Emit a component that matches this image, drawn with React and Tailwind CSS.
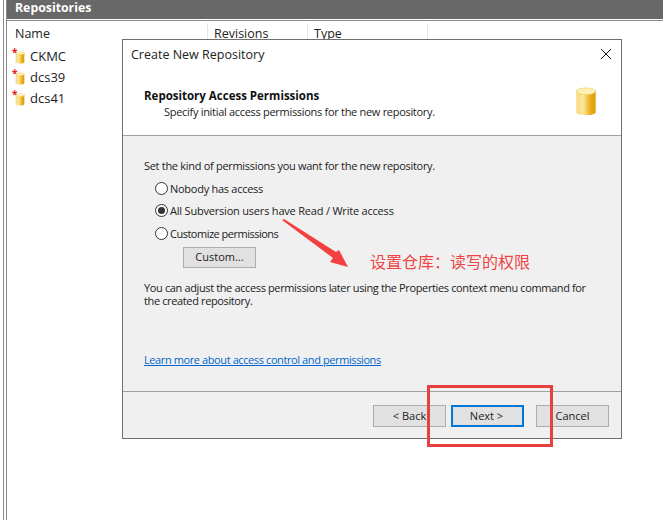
const font = { fontFamily: '"Open Sans", "Noto Sans CJK SC", sans-serif' };

const RepoIcon = ({ className }) => (
  <svg viewBox="0 0 22 30" className={className}>
    <defs>
      <linearGradient id="cyl" x1="0" x2="1" y1="0" y2="0">
        <stop offset="0" stopColor="#f6d97a" />
        <stop offset="0.35" stopColor="#fbe89c" />
        <stop offset="0.75" stopColor="#e8ab14" />
        <stop offset="1" stopColor="#dd9d08" />
      </linearGradient>
    </defs>
    <path d="M1 4v22c0 4 20 4 20 0V4z" fill="url(#cyl)" />
    <ellipse cx="11" cy="4.5" rx="10" ry="3.5" fill="#fdf0b4" stroke="#e9c44f" strokeWidth="0.6" />
  </svg>
);

const RepoRow = ({ name }) => (
  <div className="flex h-[21px] items-center pl-[12px]">
    <div className="relative h-[16px] w-[18px]">
      <RepoIcon className="absolute left-[3px] top-[2px] h-[13px] w-[10px]" />
      <span className="absolute left-[0px] top-[-3px] text-[10px] font-bold leading-[12px] text-[#e01b1b]">*</span>
    </div>
    <span className="text-[13px] leading-none text-[#222]">{name}</span>
  </div>
);

const Radio = ({ label, checked, labelClass }) => (
  <div className="flex h-[22.5px] items-center">
    <div className="flex h-[13px] w-[13px] items-center justify-center rounded-full border border-[#333] bg-white">
      {checked && <div className="h-[7px] w-[7px] rounded-full bg-[#333]" />}
    </div>
    <span className={labelClass}>{label}</span>
  </div>
);

const WizardButton = ({ children, primary }) => (
  <div
    className={
      primary
        ? 'flex h-[22px] w-[73px] items-center justify-center border-2 border-[#0078d7] bg-[#e1e1e1] pr-[2px] text-[11px] text-[#222]'
        : 'flex h-[22px] w-[73px] items-center justify-center border border-[#adadad] bg-[#e1e1e1] text-[11px] text-[#222]'
    }
  >
    {children}
  </div>
);

export default function App() {
  return (
    <div className="relative h-[520px] w-[663px] overflow-hidden bg-white" style={font}>
      <div className="flex h-full">
        <div className="w-[3px] shrink-0" />
        <div className="w-[4px] shrink-0 border-x border-[#8a8a8a]" />
        <div className="flex min-w-0 flex-1 flex-col">
          <div className="flex h-[19px] shrink-0 items-start bg-[#686868] pl-[8px] text-[12.3px] font-bold leading-[15px] text-white">
            Repositories
          </div>
          <div className="mt-[1px] h-[1px] shrink-0 bg-[#8a8a8a]" />
          <div className="flex h-[24px] shrink-0 items-center pt-[2px] text-[12.5px] text-[#222]">
            <div className="w-[201px] self-stretch border-r border-[#e5e5e5] pl-[8px] leading-[22px]">Name</div>
            <div className="w-[99px] self-stretch pl-[6px] leading-[22px]">Revisions</div>
            <div className="w-[120px] self-stretch border-l border-[#e5e5e5] pl-[6px] leading-[22px]">Type</div>
            <div className="self-stretch border-l border-[#e5e5e5]" />
          </div>
          <div className="ml-[-7px] pt-[1px]">
            <RepoRow name="CKMC" />
            <RepoRow name="dcs39" />
            <RepoRow name="dcs41" />
          </div>
        </div>
      </div>

      {/* wizard window */}
      <div className="absolute left-[122px] top-[39px] flex h-[400px] w-[500px] flex-col border border-[#6f6f6f] bg-[#f0f0f0]">
        <div className="relative h-[95px] shrink-0 bg-white">
          <div className="pl-[8px] pt-[5px] text-[12.5px] leading-[20px] text-[#222]">Create New Repository</div>
          <svg viewBox="0 0 10 10" className="absolute right-[10px] top-[9px] h-[10px] w-[10px]">
            <path d="M0 0l10 10M10 0L0 10" stroke="#111" strokeWidth="1" fill="none" />
          </svg>
          <div className="pl-[21px] pt-[23px] text-[11.5px] font-bold leading-[16px] text-[#111]">Repository Access Permissions</div>
          <div className="pl-[41px] text-[11px] leading-[16px] tracking-[-0.3px] text-[#222]">Specify initial access permissions for the new repository.</div>
          <RepoIcon className="absolute left-[452px] top-[47px] h-[29px] w-[22px]" />
        </div>
        <div className="h-[1px] shrink-0 bg-[#a0a0a0]" />
        <div className="flex flex-1 flex-col pl-[21px] pt-[22px]">
          <div className="text-[11px] leading-[16px] tracking-[-0.3px] text-[#222]">Set the kind of permissions you want for the new repository.</div>
          <div className="ml-[11px] mt-[3px] flex flex-col leading-none">
            <Radio label="Nobody has access" labelClass="ml-[2px] text-[11px] tracking-[-0.27px] text-[#222]" />
            <Radio label="All Subversion users have Read / Write access" checked labelClass="ml-[2px] text-[11px] tracking-[-0.2px] text-[#222]" />
            <Radio label="Customize permissions" labelClass="ml-[2px] text-[11px] tracking-[-0.5px] text-[#222]" />
          </div>
          <div className="ml-[39px] mt-[2px] flex h-[21px] w-[73px] items-center justify-center border border-[#adadad] bg-[#e1e1e1] text-[11px] text-[#222]">
            Custom...
          </div>
          <div className="mt-[13px] w-[450px] text-[11px] leading-[13px] tracking-[-0.37px] text-[#222]">
            You can adjust the access permissions later using the Properties context menu command for the created repository.
          </div>
          <div className="mt-[45px] text-[11px] leading-[16px] tracking-[-0.4px] text-[#0066cc] underline">Learn more about access control and permissions</div>
        </div>
        <div className="h-[1px] shrink-0 bg-[#a0a0a0]" />
        <div className="flex h-[46px] shrink-0 items-start justify-end pr-[12px] pt-[13px]">
          <WizardButton>&lt; Back</WizardButton>
          <div className="ml-[5px]">
            <WizardButton primary>Next &gt;</WizardButton>
          </div>
          <div className="ml-[12px]">
            <WizardButton>Cancel</WizardButton>
          </div>
        </div>
      </div>

      {/* screenshot annotations */}
      <svg viewBox="0 0 663 520" className="pointer-events-none absolute inset-0 h-[520px] w-[663px]">
        <polygon points="282,220 284,219 336,252 339,250 348,267 330,262 333,258" fill="#f44040" />
      </svg>
      <span className="absolute left-[370px] top-[252px] text-[16px] leading-[20px] text-[#ee4444]">设置仓库：读写的权限</span>
      <div className="absolute left-[427px] top-[385px] h-[62px] w-[126px] border-[3px] border-[#e8403f]" />
    </div>
  );
}
